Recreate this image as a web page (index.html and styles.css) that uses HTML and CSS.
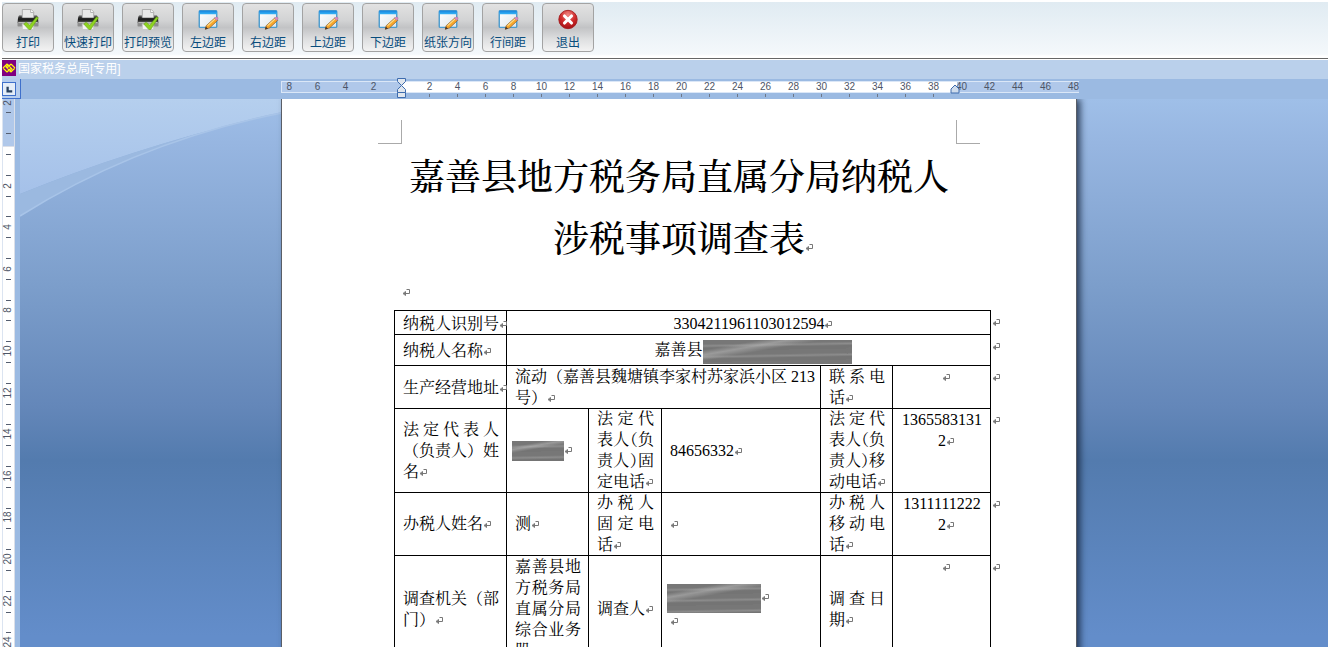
FILE: index.html
```html
<!DOCTYPE html>
<html lang="zh-CN">
<head>
<meta charset="utf-8">
<title>国家税务总局[专用]</title>
<link rel="stylesheet" href="styles.css">
</head>
<body>
<svg class="defs" aria-hidden="true">
  <defs>
    <linearGradient id="gPrinter" x1="0" y1="0" x2="0" y2="1"><stop offset="0" stop-color="#8a8a8a"/><stop offset=".3" stop-color="#2e2e2e"/><stop offset=".6" stop-color="#1c1c1c"/><stop offset="1" stop-color="#666"/></linearGradient>
    <linearGradient id="gSheet" x1="0" y1="0" x2="1" y2="1"><stop offset="0" stop-color="#fff"/><stop offset="1" stop-color="#dde5ea"/></linearGradient>
    <linearGradient id="gBar" x1="0" y1="0" x2="0" y2="1"><stop offset="0" stop-color="#1784dc"/><stop offset="1" stop-color="#35b4f8"/></linearGradient>
    <radialGradient id="gRed" cx=".5" cy=".25" r=".8"><stop offset="0" stop-color="#f08a84"/><stop offset=".5" stop-color="#d02c2c"/><stop offset="1" stop-color="#9c0c10"/></radialGradient>
  </defs>
  <symbol id="printer" viewBox="0 0 24 24">
    <path d="M5.500 12V.5h10l3 3V12z" fill="#e9e9e9" stroke="#a5a5a5"/>
    <path d="M15 .5V4h3.500" fill="#fff" stroke="#aaa"/>
    <path d="M2 7h3v3h14V7h3q1 0 1.500 4l.5 5H0l.5-5Q1 7 2 7z" fill="url(#gPrinter)"/>
    <path d="M0 15.500h24V19q0 1-1.500 1h-21Q0 20 0 19z" fill="#8d8d8d"/>
    <path d="M1 15.500h22" stroke="#c9c9c9"/>
    <path d="M5.500 17h13v6.500h-13z" fill="#f3f3f3" stroke="#c5c5c5"/>
    <path d="M7 17l3-2 4 3.500L21.500 9l2.500 1-9 13.500h-2z" fill="#8ed321" stroke="#5a9a0c" stroke-width=".6"/>
  </symbol>
  <symbol id="edit" viewBox="0 0 24 24">
    <rect x="2" y="2" width="20" height="19" rx="1" fill="url(#gSheet)" stroke="#4b9bcd" stroke-width="1.600"/>
    <rect x="2" y="2" width="20" height="4" fill="url(#gBar)"/>
    <path d="M9 23l1-4L20 10l3 3-9 8.500z" fill="#f8a72b" stroke="#8a5a22" stroke-width=".8"/>
    <path d="M11.500 19l9-8" stroke="#ffe08a" stroke-width="1.200"/>
    <path d="M8.500 23.500l1-3.500 2.500 2.500z" fill="#4a3828"/>
    <path d="M19.500 10.500l2-1.500q2.500 0 2 2.500l-1.500 1.500z" fill="#e48bc4" stroke="#9a6f9a" stroke-width=".5"/>
  </symbol>
  <symbol id="close" viewBox="0 0 24 24">
    <circle cx="12" cy="12" r="10.500" fill="url(#gRed)" stroke="#a3191b"/>
    <path d="M8 8l8 8M16 8l-8 8" stroke="#fff" stroke-width="3.600" stroke-linecap="round"/>
  </symbol>
  <symbol id="para" viewBox="0 0 8 8">
    <path d="M4.500 1.500h3v4h-6M3.500 3.500v4L1 5.500z" fill="none" stroke="#777" stroke-width="1"/>
  </symbol>
</svg>

<div class="app">
  <nav class="toolbar">
    <button class="tool" type="button"><svg><use href="#printer"/></svg><span>打印</span></button>
    <button class="tool" type="button"><svg><use href="#printer"/></svg><span>快速打印</span></button>
    <button class="tool" type="button"><svg><use href="#printer"/></svg><span>打印预览</span></button>
    <button class="tool" type="button"><svg><use href="#edit"/></svg><span>左边距</span></button>
    <button class="tool" type="button"><svg><use href="#edit"/></svg><span>右边距</span></button>
    <button class="tool" type="button"><svg><use href="#edit"/></svg><span>上边距</span></button>
    <button class="tool" type="button"><svg><use href="#edit"/></svg><span>下边距</span></button>
    <button class="tool" type="button"><svg><use href="#edit"/></svg><span>纸张方向</span></button>
    <button class="tool" type="button"><svg><use href="#edit"/></svg><span>行间距</span></button>
    <button class="tool" type="button"><svg><use href="#close"/></svg><span>退出</span></button>
  </nav>

  <header class="titlebar">
    <svg class="logo" viewBox="0 0 14 16"><rect width="14" height="16" fill="#800080"/><path d="M1 8l4-4 5 5-2.500 2.500M13 8l-4 4-5-5 2.500-2.500M5 12L1 8M9 4l4 4M5 8l4-4M9 8l-4 4" fill="none" stroke="#ff0" stroke-width="1.100"/></svg>
    <span>国家税务总局[专用]</span>
  </header>

  <div class="rulerbar">
    <button class="tabstop" type="button" aria-label="制表符"><svg viewBox="0 0 13 13"><path d="M5 4v5h5" fill="none" stroke="#27405f" stroke-width="2.500"/></svg></button>
    <div class="track">
      <div class="ruler">
        <div class="scale">
          <span>8</span><span>6</span><span>4</span><span>2</span><span></span><span>2</span><span>4</span><span>6</span><span>8</span><span>10</span><span>12</span><span>14</span><span>16</span><span>18</span><span>20</span><span>22</span><span>24</span><span>26</span><span>28</span><span>30</span><span>32</span><span>34</span><span>36</span><span>38</span><span>40</span><span>42</span><span>44</span><span>46</span><span>48</span>
        </div>
        <div class="ticks"></div>
        <svg class="indent" viewBox="0 0 11 21"><g fill="#dfe6ee" stroke="#3e6cae"><path d="M1.500 .5h8v3l-4 4-4-4z"/><path d="M1.500 14.500v-3l4-4 4 4v3z"/><path d="M1.500 14.500h8v5h-8z"/></g></svg>
        <svg class="indent-right" viewBox="0 0 10 10"><path d="M1 9V5l4-4 4 4v4z" fill="#cfdcec" stroke="#3e6cae"/></svg>
      </div>
    </div>
  </div>

  <main class="work">
    <div class="vruler">
      <svg width="13" height="560">
        <path d="M5 13h5M5 34h5M5 55h5M5 76h5M5 97h5M5 117h5M5 138h5M5 159h5M5 180h5M5 201h5M5 221h5M5 242h5M5 263h5M5 284h5M5 305h5M5 325h5M5 346h5M5 367h5M5 388h5M5 409h5M5 429h5M5 450h5M5 471h5M5 492h5M5 513h5M5 533h5" transform="translate(-1 .5)" stroke="#555e70"/>
        <g transform="rotate(-90)" text-anchor="middle">
          <text x="-4" y="9">2</text><text x="-87" y="9">2</text><text x="-128" y="9">4</text><text x="-170" y="9">6</text><text x="-211" y="9">8</text><text x="-252" y="9">10</text><text x="-294" y="9">12</text><text x="-335" y="9">14</text><text x="-377" y="9">16</text><text x="-418" y="9">18</text><text x="-460" y="9">20</text><text x="-502" y="9">22</text><text x="-543" y="9">24</text>
        </g>
      </svg>
    </div>
    <div class="desk">
      <svg class="swoosh" viewBox="0 0 262 120">
        <defs><linearGradient id="gSky" x1="0" y1="0" x2="0" y2="1"><stop offset="0" stop-color="#b5cfee"/><stop offset="1" stop-color="#a5c1e9"/></linearGradient></defs>
        <path d="M0 0H262V13Q120 46 0 95z" fill="url(#gSky)"/>
        <path d="M0 95Q120 46 262 13Q120 42 0 117z" fill="#9bb9e0"/>
        <path d="M0 117Q120 42 262 14" fill="none" stroke="#a8c4e8" stroke-width="1.500"/>
      </svg>
      <article class="paper">
        <div class="corners"><i class="corner left"></i><i class="corner right"></i></div>
        <h1>嘉善县地方税务局直属分局纳税人<br>涉税事项调查表<svg class="mark"><use href="#para"/></svg></h1>
        <p class="blank"><svg class="mark"><use href="#para"/></svg></p>
        <table>
          <colgroup><col class="c1"><col class="c2"><col class="c3"><col class="c4"><col class="c5"><col class="c6"><col class="c7"></colgroup>
          <tbody>
            <tr class="r1">
              <th scope="row">纳税人识别号<svg class="mark"><use href="#para"/></svg></th>
              <td class="center" colspan="5">3304211961103012594<svg class="mark"><use href="#para"/></svg></td>
              <td class="end"><svg class="mark"><use href="#para"/></svg></td>
            </tr>
            <tr class="r2">
              <th scope="row">纳税人名称<svg class="mark"><use href="#para"/></svg></th>
              <td class="center" colspan="5">嘉善县<span class="mask name"></span><svg class="mark"><use href="#para"/></svg></td>
              <td class="end"><svg class="mark"><use href="#para"/></svg></td>
            </tr>
            <tr class="r3">
              <th scope="row">生产经营地址<svg class="mark"><use href="#para"/></svg></th>
              <td colspan="3">流动（嘉善县魏塘镇李家村苏家浜小区 213<br>号）<svg class="mark"><use href="#para"/></svg></td>
              <th scope="row"><span class="full">联系电</span>话<svg class="mark"><use href="#para"/></svg></th>
              <td class="center top"><svg class="mark"><use href="#para"/></svg></td>
              <td class="end"><svg class="mark"><use href="#para"/></svg></td>
            </tr>
            <tr class="r4">
              <th scope="row"><span class="full">法定代表人</span><span class="full">（负责人）姓</span>名<svg class="mark"><use href="#para"/></svg></th>
              <td class="masked"><span class="mask person"></span><svg class="mark"><use href="#para"/></svg></td>
              <th scope="row"><span class="full">法定代</span><span class="full half">表人（负</span><span class="full half">责人）固</span>定电话<svg class="mark"><use href="#para"/></svg></th>
              <td>84656332<svg class="mark"><use href="#para"/></svg></td>
              <th scope="row"><span class="full">法定代</span><span class="full half">表人（负</span><span class="full half">责人）移</span>动电话<svg class="mark"><use href="#para"/></svg></th>
              <td class="center top">1365583131<br>2<svg class="mark"><use href="#para"/></svg></td>
              <td class="end"><svg class="mark"><use href="#para"/></svg></td>
            </tr>
            <tr class="r5">
              <th scope="row">办税人姓名<svg class="mark"><use href="#para"/></svg></th>
              <td>测<svg class="mark"><use href="#para"/></svg></td>
              <th scope="row"><span class="full">办税人</span><span class="full">固定电</span>话<svg class="mark"><use href="#para"/></svg></th>
              <td><svg class="mark"><use href="#para"/></svg></td>
              <th scope="row"><span class="full">办税人</span><span class="full">移动电</span>话<svg class="mark"><use href="#para"/></svg></th>
              <td class="center top">1311111222<br>2<svg class="mark"><use href="#para"/></svg></td>
              <td class="end"><svg class="mark"><use href="#para"/></svg></td>
            </tr>
            <tr class="r6">
              <th scope="row">调查机关（部<br>门）<svg class="mark"><use href="#para"/></svg></th>
              <td><span class="full">嘉善县地</span><span class="full">方税务局</span><span class="full">直属分局</span><span class="full">综合业务</span>股<svg class="mark"><use href="#para"/></svg></td>
              <th scope="row">调查人<svg class="mark"><use href="#para"/></svg></th>
              <td class="masked"><span class="mask staff"></span><svg class="mark"><use href="#para"/></svg><div class="next"><svg class="mark"><use href="#para"/></svg></div></td>
              <th scope="row"><span class="full">调查日</span>期<svg class="mark"><use href="#para"/></svg></th>
              <td class="center top"><svg class="mark"><use href="#para"/></svg></td>
              <td class="end"><svg class="mark"><use href="#para"/></svg></td>
            </tr>
          </tbody>
        </table>
      </article>
    </div>
  </main>
</div>
</body>
</html>
```
FILE: styles.css
```css
* { box-sizing: border-box; }

body {
  margin: 0;
  background: #fff;
  font-family: "Liberation Sans", "Noto Sans CJK SC", sans-serif;
}

.defs { position: absolute; width: 0; height: 0; }

.app {
  display: flex;
  flex-direction: column;
  height: 100vh;
  padding: 2px;
  overflow: hidden;
}

.toolbar {
  display: flex;
  flex: none;
  gap: 8px;
  height: 57px;
  padding-top: 1px;
  background: linear-gradient(#e0ebf2, #f4f8fb 52px, #fff 54px);
  border-bottom: 1px solid #666;
}

.tool {
  display: flex;
  flex-direction: column;
  align-items: center;
  flex: none;
  width: 52px;
  height: 49px;
  padding: 5px 0 0;
  border: 1px solid #a3a3a3;
  border-radius: 4px;
  background: linear-gradient(#e2e2e2, #d2d3d4 35%, #c2c3c5 50%, #dedfe0 75%, #f3f3f3);
  color: #084c7c;
  font-family: "Noto Sans CJK SC", sans-serif;
  font-size: 12px;
  line-height: 18px;
  white-space: nowrap;
}

.tool svg { width: 24px; height: 24px; margin-bottom: 3px; }

.titlebar {
  display: flex;
  flex: none;
  gap: 2px;
  height: 19px;
  margin-top: 1px;
  background: #bad0eb;
  color: #fff;
  font-size: 12px;
  line-height: 19px;
}

.logo { width: 14px; height: 16px; }

.rulerbar {
  display: flex;
  flex: none;
  height: 20px;
  background: #9bbae2;
}

.tabstop {
  flex: none;
  width: 19px;
  padding: 1px 0 0;
  border: 0 solid #3f70cb;
  border-width: 0 1px 1px 0;
  background: #b5cdee;
  text-align: left;
  line-height: 0;
}

.tabstop svg {
  width: 14px;
  height: 14px;
  border: 1px solid #3f70cb;
  background: #e4edf8;
}

.track {
  display: flex;
  flex: 1;
  justify-content: center;
  padding: 2px 0 0 10px;
}

.ruler { position: relative; flex: none; width: 798px; }

.scale {
  display: flex;
  height: 12px;
  overflow: hidden;
  border: solid #dbe7f7;
  border-width: 1px 0 1px 1px;
  background: linear-gradient(90deg, #b0c8ea 120px, #fff 120px 675px, #b0c8ea 675px);
  color: #4d5566;
  font-size: 10px;
  line-height: 10px;
}

.scale span { flex: none; width: 28px; text-align: center; }
.scale span:first-child { width: 22px; text-align: left; padding-left: 5px; }

.ticks {
  width: 505px;
  height: 3px;
  margin: 1px 0 0 148px;
  background: repeating-linear-gradient(90deg, #6f7787 0 1px, transparent 1px 28px);
}

.indent { position: absolute; left: 115px; top: -3px; width: 11px; height: 21px; }
.indent-right { position: absolute; left: 669px; top: 3px; width: 10px; height: 10px; }

.work { display: flex; flex: 1; min-height: 0; overflow: hidden; }

.vruler {
  flex: none;
  width: 18px;
  overflow: hidden;
  background:
    linear-gradient(90deg, #dbe4f1 1px, transparent 1px 12px, #dbdfe8 12px 13px, #9bbae2 13px),
    linear-gradient(#b0c8ea 47px, #dbdfe8 47px 48px, #fff 48px);
}

.vruler text { fill: #4d5566; font-size: 10px; }

.desk {
  position: relative;
  display: flex;
  flex: 1;
  justify-content: center;
  padding-left: 10px;
  overflow: hidden;
  background: linear-gradient(#9fbfe8, #97b6e1 8%, #7c9ecb 34%, #6487b9 56%, #537bae 66%, #638dca 98%);
}

.swoosh { position: absolute; left: 0; top: 0; width: 262px; height: 120px; }

.paper {
  position: relative;
  flex: none;
  align-self: flex-start;
  width: 794px;
  padding-top: 21px;
  background: #fff;
  box-shadow: 0 0 0 1px #5a5e66, 4px 0 7px rgba(20, 35, 60, .85);
  color: #000;
  font-family: "Liberation Serif", "Noto Serif CJK SC", "Noto Sans CJK SC", serif;
  font-size: 16px;
  line-height: 21px;
}

.corners { display: flex; justify-content: space-between; padding: 0 96px; }
.corner { width: 24px; height: 24px; border: 0 solid #aaa; border-bottom-width: 1px; }
.corner.left { border-right-width: 1px; }
.corner.right { border-left-width: 1px; }

h1 {
  margin: 3px 0 0;
  font-family: "Liberation Serif", "Noto Serif CJK SC Medium", "Noto Serif CJK SC", "Noto Sans CJK SC", serif;
  font-size: 36px;
  font-weight: 500;
  line-height: 62px;
  text-align: center;
}

.mark { width: 8px; height: 8px; margin-right: -8px; overflow: visible; vertical-align: 1px; }

.blank { height: 39px; margin: 0; padding: 10px 0 0 120px; }

table {
  width: 608px;
  margin-left: 112px;
  border-spacing: 0;
  table-layout: fixed;
}

.c1 { width: 112px; }
.c2 { width: 82px; }
.c3 { width: 73px; }
.c4 { width: 159px; }
.c5 { width: 72px; }
.c6 { width: 98px; }
.c7 { width: 12px; }

.r1 { height: 24px; }
.r2 { height: 31px; }
.r3 { height: 43px; }
.r4 { height: 84px; }
.r5 { height: 63px; }
.r6 { height: 107px; }

th, td {
  padding: 0 7px 0 9px;
  box-shadow: inset 1px 1px #000;
  font-weight: 400;
  text-align: left;
  vertical-align: middle;
  white-space: nowrap;
}

.r1 th, .r1 td, .r2 th, .r2 td { padding-top: 2px; }
.r3 th, .r3 td { padding-top: 1px; }

th.center, td.center { text-align: center; }
.top { vertical-align: top; }
td.top { padding-top: 1px; }
td.masked { padding-left: 6px; }

tr td.end {
  padding: 1px 0 0 2px;
  box-shadow: inset 1px 0 #000;
  vertical-align: top;
}

.full { display: block; text-align-last: justify; }
.half { font-feature-settings: "halt"; }

.mask {
  display: inline-block;
  vertical-align: middle;
  background:
    linear-gradient(170deg, transparent 20%, rgba(190, 190, 190, .5) 30%, transparent 42%),
    repeating-linear-gradient(179deg, #777 0 4px, #8c8c8c 6px, #747474 8px 11px);
}

.name { width: 149px; height: 24px; margin: -2px -8px -2px 0; }
.person { width: 52px; height: 20px; }
.staff { width: 94px; height: 29px; margin: -3px 0; }
.next { padding-left: 3px; }
```
